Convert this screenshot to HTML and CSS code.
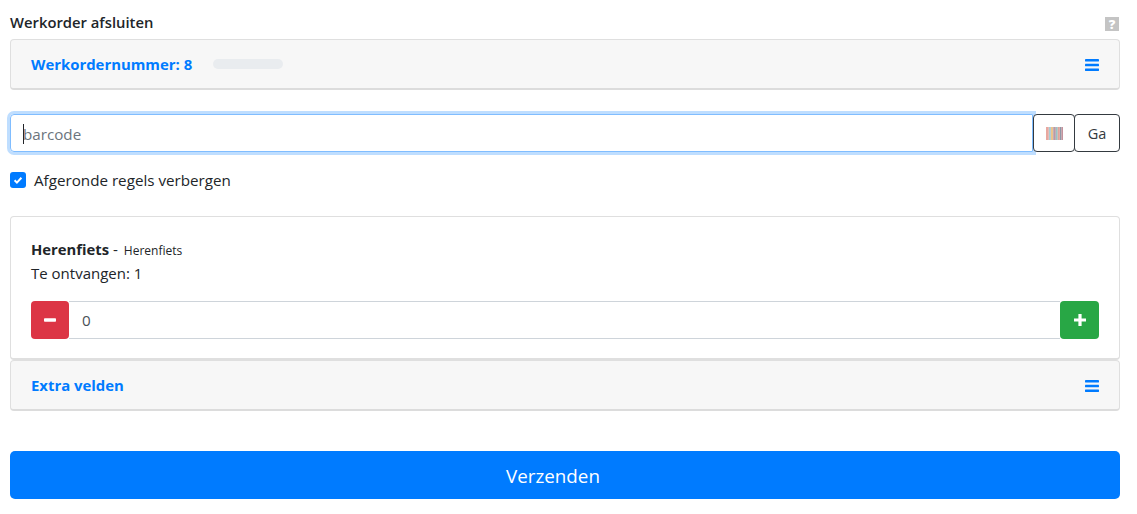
FILE: index.html
```html
<!DOCTYPE html>
<html lang="nl">
<head>
<meta charset="utf-8">
<title>Werkorder afsluiten</title>
<link rel="stylesheet" href="styles.css">
</head>
<body>
<main class="page">
  <div class="title-row">
    <h1 class="title">Werkorder afsluiten</h1>
    <span class="help">?</span>
  </div>
  <section class="panel panel-head">
    <div class="panel-label">
      <strong class="link">Werkordernummer: 8</strong>
      <span class="skeleton"></span>
    </div>
    <svg class="bars" viewBox="0 0 14 12" aria-hidden="true"><rect y="0" width="14" height="2.4" rx=".4"/><rect y="4.8" width="14" height="2.4" rx=".4"/><rect y="9.6" width="14" height="2.4" rx=".4"/></svg>
  </section>
  <div class="input-group">
    <div class="barcode-input"><span class="caret"></span><span class="placeholder">barcode</span></div>
    <button class="outline scan" type="button">
      <svg viewBox="0 0 17 13" aria-hidden="true">
        <rect width="17" height="13" fill="#e4dcdc"/>
        <rect x="0" width="2.6" height="13" fill="#e8a8a0"/><rect x="3" width="1.8" height="13" fill="#a9cdd4"/><rect x="5" width="2" height="13" fill="#ecc48c"/><rect x="7.3" width="2.4" height="13" fill="#b79aa8"/><rect x="10" width="1.6" height="13" fill="#98c4c4"/><rect x="11.8" width="2" height="13" fill="#e0a49c"/><rect x="14" width="1.3" height="13" fill="#8f97a6"/><rect x="15.5" width="1.5" height="13" fill="#c4929c"/>
      </svg>
    </button>
    <button class="outline go" type="button">Ga</button>
  </div>
  <label class="check-row">
    <span class="check"><svg viewBox="0 0 12 12" aria-hidden="true"><path d="M2.6 6.3l2.3 2.3 4.5-4.8" fill="none" stroke="#fff" stroke-width="2"/></svg></span>
    <span>Afgeronde regels verbergen</span>
  </label>
  <section class="panel item">
    <p class="item-title"><strong>Herenfiets</strong> - <small>Herenfiets</small></p>
    <p class="item-qty">Te ontvangen: 1</p>
    <div class="stepper">
      <button class="step minus" type="button"><svg viewBox="0 0 12 12" aria-hidden="true"><rect x="0" y="4.3" width="12" height="3.4" rx=".8"/></svg></button>
      <div class="step-value">0</div>
      <button class="step plus" type="button"><svg viewBox="0 0 12 12" aria-hidden="true"><path d="M4.4 0h3.2v4.4H12v3.2H7.6V12H4.4V7.6H0V4.4h4.4z"/></svg></button>
    </div>
  </section>
  <section class="panel panel-head extra">
    <strong class="link">Extra velden</strong>
    <svg class="bars" viewBox="0 0 14 12" aria-hidden="true"><rect y="0" width="14" height="2.4" rx=".4"/><rect y="4.8" width="14" height="2.4" rx=".4"/><rect y="9.6" width="14" height="2.4" rx=".4"/></svg>
  </section>
  <button class="submit" type="button">Verzenden</button>
</main>
</body>
</html>
```
FILE: styles.css
```css
* { box-sizing: border-box; }
html, body { margin: 0; background: #fff; }
body {
  font-family: "Open Sans", "Noto Sans", sans-serif;
  font-size: 15.2px;
  color: #212529;
}
.page { width: 1130px; padding: 0 10px; display: flex; flex-direction: column; }
.title-row { height: 39px; display: flex; justify-content: space-between; align-items: flex-start; }
.title { margin: 12px 0 0; font-size: 14.8px; line-height: 20px; font-weight: 600; }
.help {
  width: 14px; height: 14px; margin: 17px 1px 0 0;
  background: #c4c4c4; color: #fff; font-size: 13px; font-weight: 800;
  line-height: 14px; text-align: center;
}
.panel {
  border: 1px solid #dfdfdf;
  border-radius: 4px;
}
.panel-head {
  height: 51px; padding: 0 20px;
  background: #f7f7f7;
  border-bottom: 2px solid #dcdcdc;
  display: flex; align-items: center; justify-content: space-between;
}
.panel-label { display: flex; align-items: center; gap: 21px; }
.link { color: #007bff; font-size: 14.9px; font-weight: 700; }
.skeleton { width: 70px; height: 10px; border-radius: 5px; background: #e9ecef; }
.bars { width: 14px; height: 12px; fill: #007bff; position: relative; top: 1px; }
.input-group { display: flex; margin-top: 24px; height: 38px; }
.barcode-input {
  flex: 1; position: relative;
  border: 1px solid #80bdff;
  border-radius: 4px 0 0 4px;
  box-shadow: 0 0 0 3px #bfdeff;
  padding-left: 12px;
  line-height: 38px;
  z-index: 1;
}
.placeholder { color: #6c757d; }
.caret { position: absolute; left: 12px; top: 9px; width: 1px; height: 20px; background: #212529; }
.outline {
  height: 38px; padding: 0;
  background: #fff; color: #343a40;
  border: 1px solid #343a40;
  border-radius: 4px;
  font: inherit; font-size: 14.5px;
}
.scan { width: 42px; display: flex; align-items: center; justify-content: center; position: relative; z-index: 2; }
.scan svg { width: 17px; height: 13px; }
.go { width: 46px; margin-left: -1px; position: relative; z-index: 2; }
.check-row { display: flex; align-items: center; gap: 8px; margin-top: 18px; height: 20px; }
.check {
  width: 16px; height: 16px; border-radius: 3px; background: #007bff;
  display: flex; align-items: center; justify-content: center;
}
.check svg { width: 12px; height: 12px; }
.item { margin-top: 26px; height: 144px; padding: 20px 20px 0; border-bottom-width: 2px; }
.item-title { margin: 0; height: 24px; line-height: 24px; }
.item-title strong { font-size: 14.8px; font-weight: 700; }
.item-title small { font-size: 12px; margin-left: 2px; }
.item-qty { margin: 0; height: 24px; line-height: 24px; font-size: 15px; }
.stepper { display: flex; height: 38px; margin-top: 16px; }
.step {
  width: 39px; height: 38px; padding: 0; border: 0; border-radius: 4px;
  display: flex; align-items: center; justify-content: center;
}
.step svg { width: 12px; height: 12px; fill: #fff; }
.minus { background: #dc3545; width: 38px; }
.plus { background: #28a745; }
.step-value {
  flex: 1; border: 1px solid #ced4da; border-left: 0; border-right: 0;
  padding-left: 13px; line-height: 36px; color: #495057;
}
.extra { height: 51px; }
.submit {
  margin-top: 40px; height: 48px; padding: 2px 24px 0 0;
  background: #007bff; color: #fff; border: 0; border-radius: 5px;
  font: inherit; font-size: 18.8px;
}
```
